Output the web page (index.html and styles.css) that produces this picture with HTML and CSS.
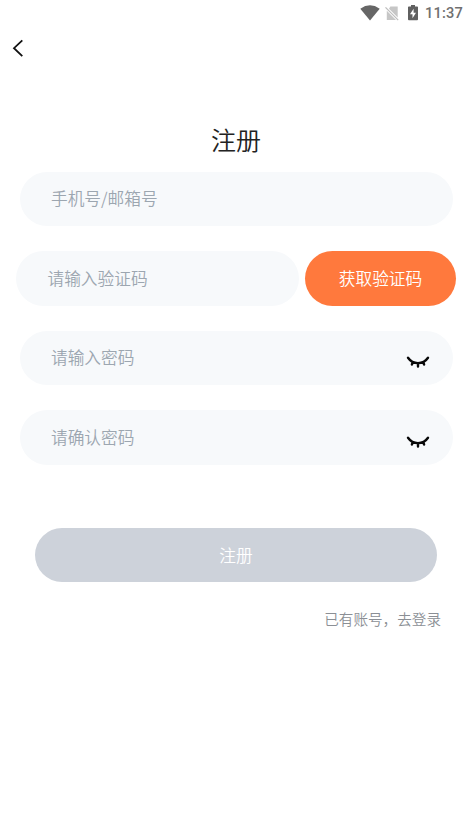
FILE: index.html
```html
<!DOCTYPE html>
<html lang="zh-CN">
<head>
<meta charset="utf-8">
<title>注册</title>
<link rel="stylesheet" href="styles.css">
</head>
<body>
<header class="status">
  <svg class="wifi" width="20" height="16" viewBox="0 0 20 16"><path d="M.3 3.7Q10-3 19.7 3.7L10 15.6Z" fill="#666"/></svg>
  <svg class="sim" width="14" height="15" viewBox="0 0 14 15"><path d="M5.3 .5h7.4v11L4 2.7ZM1.8 4.8 11 14H1.8Z" fill="#c6c6c6"/><path d="m.5 1.3 12.7 12.8" stroke="#bcbcbc" stroke-width="1.2"/></svg>
  <svg class="battery" width="10" height="16" viewBox="0 0 10 16"><path d="M3 0h4v1.5h2.2q.8 0 .8.8v12q0 1-.9 1H.9q-.9 0-.9-1v-12q0-.8.8-.8H3Z" fill="#606060"/><path d="M5.6 3.8 2 9.2h2.5v4L8 7.8H5.6Z" fill="#fff"/></svg>
  <span class="time">11:37</span>
</header>
<nav class="nav">
  <svg width="12" height="18" viewBox="0 0 12 18" fill="none" stroke="#111" stroke-width="1.8"><path d="M10.3 1.3 2 9.2l8.3 7.9"/></svg>
</nav>
<main>
  <h1 class="title">注册</h1>
  <div class="fields">
    <div class="field"><span>手机号/邮箱号</span></div>
    <div class="code-row">
      <div class="field"><span>请输入验证码</span></div>
      <button class="code-button">获取验证码</button>
    </div>
    <div class="field"><span>请输入密码</span>
      <svg class="eye" width="24" height="13" viewBox="0 0 24 13"><path d="M2 2.7C7 9.9 17 9.9 22 2.7M6.7 7.3 5.9 9.5M12 8.3v3.2M17.3 7.3l.8 2.2" fill="none" stroke="#080808" stroke-width="2.4" stroke-linecap="round"/></svg>
    </div>
    <div class="field"><span>请确认密码</span>
      <svg class="eye" width="24" height="13" viewBox="0 0 24 13"><path d="M2 2.7C7 9.9 17 9.9 22 2.7M6.7 7.3 5.9 9.5M12 8.3v3.2M17.3 7.3l.8 2.2" fill="none" stroke="#080808" stroke-width="2.4" stroke-linecap="round"/></svg>
    </div>
  </div>
  <button class="submit">注册</button>
  <a class="login">已有账号，去登录</a>
</main>
</body>
</html>
```
FILE: styles.css
```css
* { box-sizing: border-box; }
body {
  margin: 0;
  min-height: 839px;
  background: #fff;
  font-family: "Noto Sans CJK SC", sans-serif;
  font-size: 16.7px;
  font-weight: 350;
}
.status {
  height: 26px;
  padding-right: 8px;
  display: flex;
  align-items: center;
  justify-content: flex-end;
}
.wifi { margin-right: 5px; }
.sim { margin-right: 9px; }
.battery { margin-right: 7px; }
.time {
  font: 500 14.6px/26px Roboto, sans-serif;
  letter-spacing: 0.2px;
  color: #707070;
}
.nav {
  height: 44px;
  padding-left: 12px;
  display: flex;
  align-items: center;
}
.nav svg { display: block; }
main { display: flex; flex-direction: column; padding-top: 51px; }
.title {
  margin: 0 0 14.5px;
  padding-left: 1px;
  font-size: 25px;
  line-height: 36px;
  font-weight: 350;
  color: #222;
  text-align: center;
}
.fields {
  display: flex;
  flex-direction: column;
  gap: 25px;
  padding: 0 18.5px 0 19.5px;
}
.field {
  height: 54.6px;
  padding: 0 23px 0 31.5px;
  display: flex;
  align-items: center;
  justify-content: space-between;
  border-radius: 28px;
  background: #f7f9fb;
  color: #9ca6b0;
}
.field span { padding-bottom: 1px; }
.code-row { display: flex; gap: 6px; margin: 0 -3.5px; }
.code-row .field { flex: 1; }
button {
  border: 0;
  padding: 0;
  height: 54.6px;
  border-radius: 28px;
  color: #fff;
  font: inherit;
}
.code-button { width: 151px; background: #ff793d; }
.eye { margin-top: 7px; }
.submit { margin: 63px 34px 0 35px; background: #cdd2da; }
.login {
  align-self: flex-end;
  margin: 26px 30px 0 0;
  font-size: 14.6px;
  line-height: 22px;
  color: #8b8f95;
}
```
